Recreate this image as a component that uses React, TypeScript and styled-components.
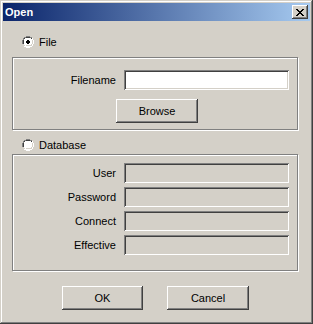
import styled, { createGlobalStyle } from 'styled-components';

const GlobalStyle = createGlobalStyle`
  html, body {
    margin: 0;
    padding: 0;
    background: #d4d0c8;
  }
  body {
    font-family: 'Liberation Sans', Arial, sans-serif;
    font-size: 11px;
    color: #000;
  }
`;

const Window = styled.div`
  box-sizing: border-box;
  width: 313px;
  height: 324px;
  padding: 3px;
  background: #d4d0c8;
  box-shadow: inset -1px -1px #404040, inset 1px 1px #d4d0c8,
    inset -2px -2px #808080, inset 2px 2px #fff;
  display: flex;
  flex-direction: column;
`;

const TitleBar = styled.div`
  height: 18px;
  display: flex;
  align-items: center;
  justify-content: space-between;
  padding: 0 2px 0 2px;
  background: linear-gradient(to right, #0a246a, #a6caf0);
  color: #fff;
  font-weight: bold;
`;

const CloseButton = styled.div`
  box-sizing: border-box;
  width: 16px;
  height: 14px;
  display: flex;
  align-items: center;
  justify-content: center;
  background: #d4d0c8;
  box-shadow: inset -1px -1px #404040, inset 1px 1px #fff,
    inset -2px -2px #808080, inset 2px 2px #d4d0c8;
`;

const Body = styled.div`
  flex: 1;
  display: flex;
  flex-direction: column;
  padding: 15px 11px 0 9px;
`;

const RadioRow = styled.label<{ $top: number }>`
  display: flex;
  align-items: center;
  gap: 5px;
  height: 12px;
  margin-top: ${(p) => p.$top}px;
  padding-left: 10px;
`;

const GroupBox = styled.div<{ $top: number; $padTop: number; $bottom: number }>`
  box-sizing: border-box;
  width: 286px;
  margin-top: ${(p) => p.$top}px;
  padding: ${(p) => p.$padTop}px 0 ${(p) => p.$bottom}px 0;
  border: 1px solid #808080;
  box-shadow: inset 1px 1px #fff, 1px 1px #fff;
  display: grid;
  grid-template-columns: 103px 165px;
  column-gap: 8px;
  row-gap: 4px;
`;

const FieldLabel = styled.span`
  justify-self: end;
  align-self: center;
`;

const TextInput = styled.div<{ $disabled?: boolean }>`
  box-sizing: border-box;
  height: 20px;
  background: ${(p) => (p.$disabled ? '#d4d0c8' : '#fff')};
  box-shadow: inset 1px 1px #808080, inset -1px -1px #fff,
    inset 2px 2px #404040, inset -2px -2px #d4d0c8;
`;

const Button = styled.div<{ $width: number }>`
  box-sizing: border-box;
  width: ${(p) => p.$width}px;
  height: 24px;
  display: flex;
  align-items: center;
  justify-content: center;
  background: #d4d0c8;
  box-shadow: inset -1px -1px #404040, inset 1px 1px #fff,
    inset -2px -2px #808080, inset 2px 2px #d4d0c8;
`;

const BrowseWrap = styled.div`
  grid-column: 1 / 3;
  padding-left: 103px;
  margin-top: 5px;
`;

const ButtonRow = styled.div`
  display: flex;
  justify-content: center;
  gap: 24px;
  margin-top: 15px;
`;

const Radio = ({ checked }: { checked?: boolean }) => (
  <svg width="12" height="12" viewBox="0 0 12 12" shapeRendering="crispEdges">
    <path d="M4 0h4v1H4zM2 1h2v1H2zM8 1h2v1H8zM1 2h1v2H1zM0 4h1v4H0z" fill="#808080" />
    <path d="M4 1h4v1H4zM2 2h2v1H2zM8 2h2v1H8zM2 3h1v1H2zM1 4h1v4H1z" fill="#404040" />
    <path d="M2 3h8v6H2zM3 2h6v8H3zM4 2h4v9H4z" fill="#fff" />
    <path d="M10 3h1v1h-1zM10 4h1v4h-1zM9 8h1v1H9zM8 9h1v1H8zM4 9h4v1H4z" fill="#d4d0c8" />
    <path d="M11 4h1v4h-1zM10 8h1v2h-1zM8 10h2v1H8zM4 11h4v1H4zM2 10h2v1H2zM10 2h1v2h-1z" fill="#fff" />
    {checked && <path d="M5 4h2v4H5zM4 5h4v2H4z" fill="#000" />}
  </svg>
);

const CloseGlyph = () => (
  <svg width="8" height="7" viewBox="0 0 8 7" shapeRendering="crispEdges">
    <path
      d="M0 0h2v1H0zM6 0h2v1H6zM1 1h2v1H1zM5 1h2v1H5zM2 2h4v1H2zM3 3h2v1H3zM2 4h4v1H2zM1 5h2v1H1zM5 5h2v1H5zM0 6h2v1H0zM6 6h2v1H6z"
      fill="#000"
    />
  </svg>
);

export default function App() {
  return (
    <>
      <GlobalStyle />
      <Window>
        <TitleBar>
          <span>Open</span>
          <CloseButton>
            <CloseGlyph />
          </CloseButton>
        </TitleBar>
        <Body>
          <RadioRow $top={0}>
            <Radio checked />
            File
          </RadioRow>
          <GroupBox $top={9} $padTop={12} $bottom={6}>
            <FieldLabel>Filename</FieldLabel>
            <TextInput />
            <BrowseWrap>
              <Button $width={82}>Browse</Button>
            </BrowseWrap>
          </GroupBox>
          <RadioRow $top={9}>
            <Radio />
            Database
          </RadioRow>
          <GroupBox $top={3} $padTop={8} $bottom={15}>
            <FieldLabel>User</FieldLabel>
            <TextInput $disabled />
            <FieldLabel>Password</FieldLabel>
            <TextInput $disabled />
            <FieldLabel>Connect</FieldLabel>
            <TextInput $disabled />
            <FieldLabel>Effective</FieldLabel>
            <TextInput $disabled />
          </GroupBox>
          <ButtonRow>
            <Button $width={81}>OK</Button>
            <Button $width={82}>Cancel</Button>
          </ButtonRow>
        </Body>
      </Window>
    </>
  );
}
